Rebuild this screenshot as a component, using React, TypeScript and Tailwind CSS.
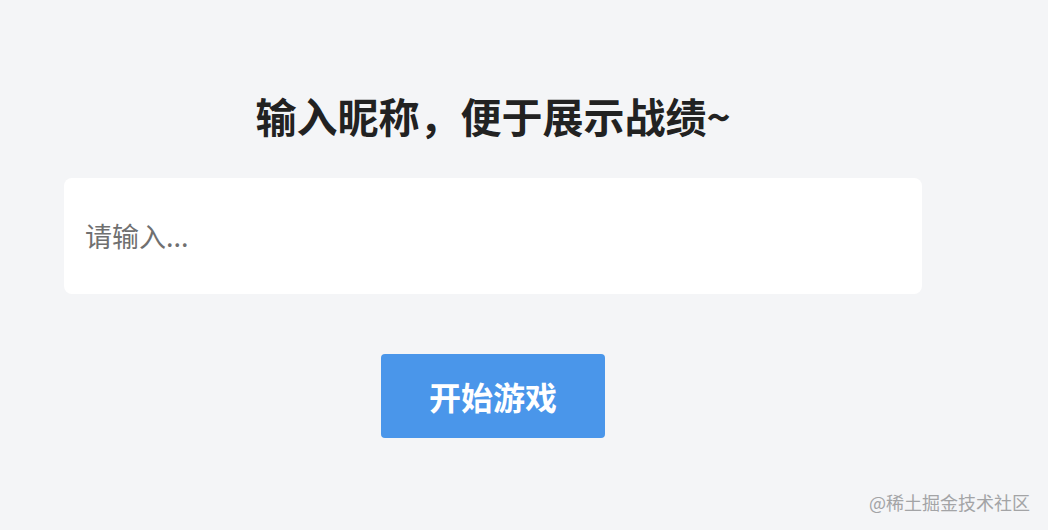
import React from "react";

export default function App() {
  return (
    <div
      className="relative w-[1048px] h-[530px] overflow-hidden bg-[#f4f5f7]"
      style={{ fontFamily: '"Noto Sans CJK SC", "Noto Sans", sans-serif' }}
    >
      <div className="flex flex-col items-center w-[858px] ml-[64px] pt-[87px]">
        <h1 className="text-[41px] leading-[56px] font-bold text-[#222222]">
          输入昵称，便于展示战绩~
        </h1>
        <div className="mt-[35px] w-full h-[116px] bg-white rounded-[8px] flex items-center px-[21px]">
          <input
            className="w-full bg-transparent outline-none text-[27px] text-[#333] placeholder:text-[#707070]"
            placeholder="请输入..."
            style={{ fontFamily: '"Noto Sans CJK SC", "Noto Sans", sans-serif' }}
          />
        </div>
        <button className="mt-[60px] w-[224px] h-[84px] bg-[#4a96ea] rounded-[4px] text-white text-[32px] font-bold flex items-center justify-center">
          开始游戏
        </button>
      </div>
      <div className="absolute right-[18px] bottom-[16px] text-[18px] leading-[24px] text-[#a3a4a6]">
        @稀土掘金技术社区
      </div>
    </div>
  );
}
